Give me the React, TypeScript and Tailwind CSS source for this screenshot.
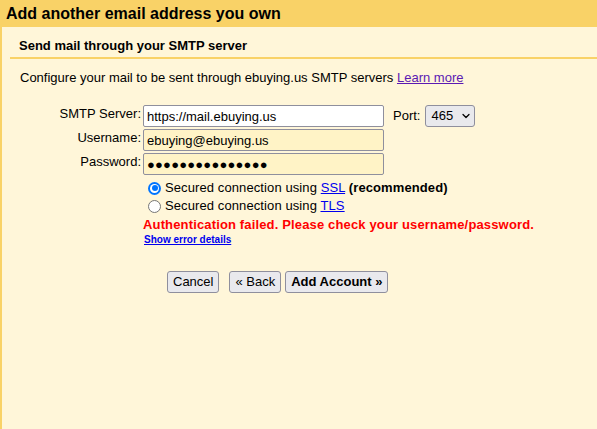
import { ChevronDown } from "lucide-react";

function Radio({ checked }: { checked: boolean }) {
  return checked ? (
    <span className="w-[13px] h-[13px] rounded-full bg-[#0075ff] flex items-center justify-center shrink-0">
      <span className="w-[9px] h-[9px] rounded-full bg-white flex items-center justify-center">
        <span className="w-[6px] h-[6px] rounded-full bg-[#0075ff]" />
      </span>
    </span>
  ) : (
    <span className="w-[13px] h-[13px] rounded-full border border-[#767676] bg-white shrink-0" />
  );
}

const inputCls = "h-[22px] w-[241px] border border-[#8f8f9d] rounded-[2px] px-[3px] text-[13px] text-black outline-none";

export default function App() {
  return (
    <div
      className="w-[597px] h-[429px] bg-[#fff6d9] border-l-2 border-[#f9d267] text-black overflow-hidden"
      style={{ fontFamily: '"Liberation Sans", Arial, sans-serif' }}
    >
      <div className="h-[27px] bg-[#f9d267] -ml-[2px] pl-[6px] flex items-center text-[16px] font-bold">
        Add another email address you own
      </div>

      <div className="pl-[17px] pt-[9px] h-[30px] text-[13px] font-bold">Send mail through your SMTP server</div>
      <div className="ml-[8px] border-t-2 border-[#f9d267]" />

      <div className="pl-[18px] pt-[11px] text-[13px] leading-[16px]">
        Configure your mail to be sent through ebuying.us SMTP servers{" "}
        <a href="#" className="text-[#5b1ab3] underline">Learn more</a>
      </div>

      <div className="mt-[19px] grid grid-cols-[141px_auto] gap-y-[2px] text-[13px]">
        <div className="text-right pr-[2px] leading-[16px] pt-[1px]">SMTP Server:</div>
        <div className="flex items-center">
          <input className={`${inputCls} bg-white`} defaultValue="https://mail.ebuying.us" />
          <span className="ml-[9px]">Port:</span>
          <span className="ml-[5px] h-[22px] w-[50px] border border-[#8f8f9d] rounded-[3px] bg-[#e9e9ed] flex items-center pl-[5px] gap-[7px]">
            465
            <ChevronDown size={12} strokeWidth={2.5} />
          </span>
        </div>

        <div className="text-right pr-[2px] leading-[16px] pt-[1px]">Username:</div>
        <div>
          <input className={`${inputCls} bg-[#fff3c6]`} defaultValue="ebuying@ebuying.us" />
        </div>

        <div className="text-right pr-[2px] leading-[16px] pt-[1px]">Password:</div>
        <div>
          <input
            className={`${inputCls} bg-[#fff3c6] text-[11px] tracking-[0.2px]`}
            defaultValue="●●●●●●●●●●●●●●●"
          />
        </div>

        <div />
        <div className="pl-[5px] pt-[3px] flex flex-col gap-[2px]">
          <div className="flex items-center gap-[4px] leading-[16px]">
            <Radio checked />
            <span className="tracking-[0.1px]">
              Secured connection using <a href="#" className="text-[#0000ee] underline">SSL</a>{" "}
              <b>(recommended)</b>
            </span>
          </div>
          <div className="flex items-center gap-[4px] leading-[16px]">
            <Radio checked={false} />
            <span className="tracking-[0.1px]">
              Secured connection using <a href="#" className="text-[#0000ee] underline">TLS</a>
            </span>
          </div>
        </div>

        <div />
        <div>
          <div className="text-[#ff0000] font-bold leading-[16px] pt-[1px] tracking-[0.15px]">
            Authentication failed. Please check your username/password.
          </div>
          <a href="#" className="block text-[10px] font-bold text-[#0000ee] underline leading-[13px] pl-[1px]">
            Show error details
          </a>
        </div>
      </div>

      <div className="mt-[25px] pl-[165px] flex items-center text-[13px]">
        <button className="h-[22px] px-[5px] border border-[#8f8f9d] rounded-[3px] bg-[#e9e9ed]">Cancel</button>
        <button className="ml-[10px] h-[22px] px-[5px] border border-[#8f8f9d] rounded-[3px] bg-[#e9e9ed]">« Back</button>
        <button className="ml-[4px] h-[22px] px-[5px] border border-[#8f8f9d] rounded-[3px] bg-[#e9e9ed] font-bold">
          Add Account »
        </button>
      </div>
    </div>
  );
}
